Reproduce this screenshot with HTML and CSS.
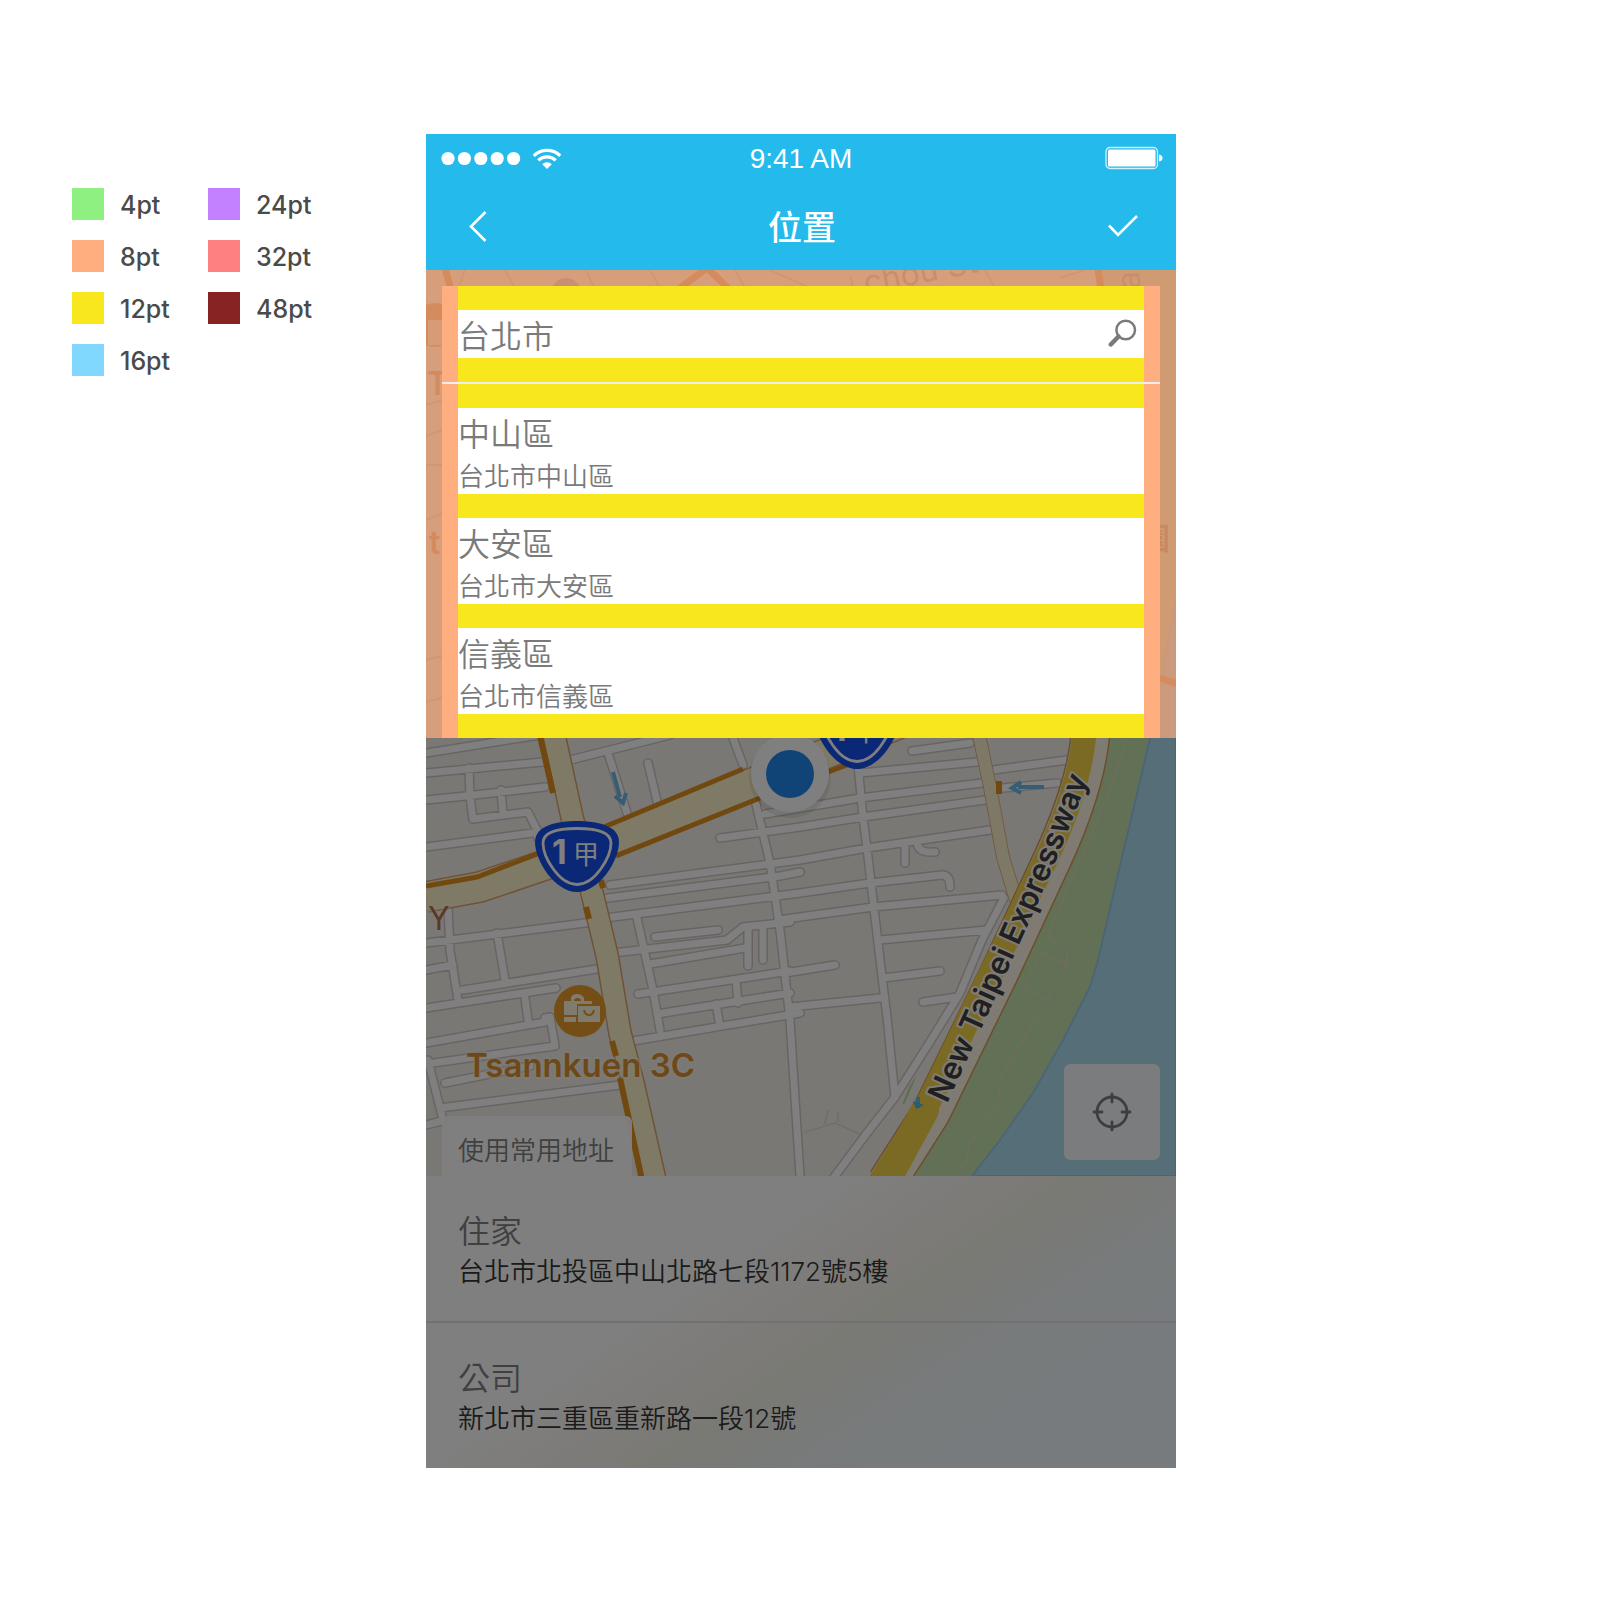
FILE: index.html
```
<!DOCTYPE html>
<html lang="zh-Hant">
<head>
<meta charset="utf-8">
<meta name="viewport" content="width=device-width, initial-scale=1">
<title>位置</title>
<link rel="stylesheet" href="styles.css">
</head>
<body>
<div class="sheet">
  <aside class="legend">
    <ul class="legend-col">
      <li><i class="swatch s4"></i><span>4pt</span></li>
      <li><i class="swatch s8"></i><span>8pt</span></li>
      <li><i class="swatch s12"></i><span>12pt</span></li>
      <li><i class="swatch s16"></i><span>16pt</span></li>
    </ul>
    <ul class="legend-col">
      <li><i class="swatch s24"></i><span>24pt</span></li>
      <li><i class="swatch s32"></i><span>32pt</span></li>
      <li><i class="swatch s48"></i><span>48pt</span></li>
    </ul>
  </aside>

  <div class="phone">
    <header class="topbar">
      <div class="status">
        <svg class="signal" width="122" height="24" viewBox="-2 -1 122 24" aria-hidden="true">
          <g fill="#fff"><circle cx="7" cy="11.500" r="6.600"/><circle cx="23.400" cy="11.500" r="6.600"/><circle cx="39.800" cy="11.500" r="6.600"/><circle cx="56.200" cy="11.500" r="6.600"/><circle cx="72.600" cy="11.500" r="6.600"/>
          <path d="M101.200 17.200 a7 7 0 0 1 9.600 0 L106 22z"/></g>
          <g fill="none" stroke="#fff" stroke-width="3.200"><path d="M92.800 8.800 a19 19 0 0 1 26.400 0"/><path d="M97.300 13.300 a12.500 12.500 0 0 1 17.400 0"/></g>
        </svg>
        <span class="time">9:41 AM</span>
        <svg class="battery" width="58" height="24" viewBox="0 0 58 24" aria-hidden="true">
          <rect x="1" y="1.500" width="51.500" height="21" rx="4" fill="none" stroke="#fff" stroke-opacity=".8" stroke-width="1.300"/>
          <rect x="3" y="3.500" width="47.500" height="17" rx="1.500" fill="#fff"/>
          <path d="M54 8.500 q3.500 .5 3.500 3.500 t-3.500 3.500z" fill="#fff"/>
        </svg>
      </div>
      <nav class="navbar">
        <button class="nav-btn" type="button" aria-label="返回"><svg width="32" height="36" viewBox="0 0 32 36"><path d="M21.500 4 L7 18.500 L21.500 33" fill="none" stroke="#fff" stroke-width="2.600"/></svg></button>
        <h1>位置</h1>
        <button class="nav-btn" type="button" aria-label="確定"><svg width="32" height="36" viewBox="0 0 32 36"><path d="M1 17.500 L10 27 L29 8" fill="none" stroke="#fff" stroke-width="2.600"/></svg></button>
      </nav>
    </header>

    <main class="content">
      <section class="map-area">
        <svg class="map" viewBox="426 270 750 906" preserveAspectRatio="xMidYMin slice" aria-hidden="true">
          <defs>
            <path id="streets" d="M426 753L540 735 M426 773L543 762 M426 800L466 796 545 787 M469 768L470 797 473 819 528 812 536 828 538 838 M501 790L503 815 M426 847L540 832
              M570 760L670 735 M608 753L627 813 M648 763L657 801 M733 738L743 765 M755 800L770 863 780 930 790 1020 800 1176 M720 838L800 827
              M610 885L800 860 M600 899L780 876 800 872 M605 918L800 893 M860 773L977 762 M765 814L860 798 982 783 M800 827L863 817 985 800 M800 860L867 848 990 830 M800 893L870 883 942 875Q950 875 950 887 M778 920L873 907 1002 895 M880 940L987 930
              M785 973L835 965 M883 978L940 971 M790 1007L880 998 M923 1002L957 997 M858 765L863 817 868 857 875 917 880 960 887 1017 895 1097
              M1004 898L982 940 960 993 933 1037 895 1097 867 1133 832 1180 M905 843L905 863 M916 841L918 846Q920 853 935 852 M912 751L970 743
              M993 770L1067 760 M1003 788L1057 783 M448 908L450 950 458 1000 M497 933L505 980 M426 943L593 922 M426 970L453 965 M463 990L603 968 M426 1008L556 988 M426 1043L545 1022 M525 998L528 1020 M545 1018L550 1017 555 1046 M426 1064L555 1046 M445 1083L530 1066 M440 1108L620 1085 M428 1060L442 1116 M426 1125L442 1121
              M613 953L727 940 743 927 790 922 M637 918L653 990 660 1030 M655 937L718 930 M650 964L745 948 M638 994L790 971 M657 1014L790 993 M736 980L738 1003 M633 1041L800 1013 M748 928L748 966 M763 930L763 960 M716 1004L719 1021"/>
            <path id="mainroad" d="M426 897L480 887 560 860 750 784 830 752 920 715"/>
            <path id="avenue" d="M553 730L572 817 593 897 607 955 620 1033 633 1083 655 1180"/>
            <path id="lane" d="M978 730L990 787 1003 857 1016 900"/>
            <path id="expressway" d="M1091 725Q1089 780 1052 860L998 976 931 1113 887 1182"/>
            <path id="expressname" d="M947 1104L982 1027 1023 936Q1066 840 1089 776L1103 736"/>
            <g id="shield">
              <path d="M577 821C596 821 619 825 619 842C619 861 599 892 577 892C555 892 535 861 535 842C535 825 558 821 577 821Z" fill="#1450ec"/>
              <path d="M577 828.500C594 828.500 611 831 611 843C611 857 595 884.500 577 884.500C559 884.500 543 857 543 843C543 831 560 828.500 577 828.500Z" fill="none" stroke="#fff" stroke-width="2.800"/>
              <text x="552" y="864" class="route-no">1</text><text x="573" y="864" class="route-cjk">甲</text>
            </g>
          </defs>
          <rect x="426" y="270" width="750" height="906" fill="#f5f0e8"/>
          <path d="M1100 270H1176V1176H880L1010 960 1090 800Z" fill="#c4e3ac"/>
          <path d="M1152 730L1123 853 1098 960 1090 987 1063 1040 1033 1093 1000 1140 972 1176H1176V600Z" fill="#acdcf0" stroke="#99cbea" stroke-width="2"/>
          <path d="M1127 738L1103 807 1047 937 1067 950 1067 965 1047 1000 1001 1077 997 1105 970 1143 967 1160 955 1176 M1042 953L1067 965 M1042 953L1023 987 1047 1000" fill="none" stroke="#ded9ba" stroke-width="1.500"/>
          <path d="M805 1132L835 1123 862 1135M825 1124L828 1110M838 1122V1112" fill="none" stroke="#ded9d0" stroke-width="1.300"/>
          <g fill="none" stroke-linecap="round" stroke-linejoin="round">
            <use href="#streets" stroke="#d2c9c6" stroke-width="10"/>
            <use href="#streets" stroke="#fff" stroke-width="7"/>
          </g>
          <g fill="none">
            <use href="#lane" stroke="#e2b78d" stroke-width="14"/><use href="#lane" stroke="#fcf3cc" stroke-width="12"/>
            <use href="#avenue" stroke="#dea570" stroke-width="24"/><use href="#mainroad" stroke="#dea570" stroke-width="32"/>
            <use href="#avenue" stroke="#fcf5cb" stroke-width="21"/><use href="#mainroad" stroke="#fcf5cb" stroke-width="29"/>
          </g>
          <path d="M426 886L477 877 540 853M604 827L743 769M616 856L760 798M828 772L847 765" fill="none" stroke="#e3911f" stroke-width="5"/>
          <path d="M540 736L553 793M586 907L589 919M601 880L603 888M612 1041L616 1056M620 1078L642 1180M999 781V794" fill="none" stroke="#e3911f" stroke-width="6"/>
          <g fill="none">
            <use href="#expressway" stroke="#d89b59" stroke-width="40"/>
            <use href="#expressway" stroke="#fff6e5" stroke-width="37"/>
            <path d="M1085 725Q1082 783 1047 857L991 973 925 1110 880 1182" stroke="#f4d446" stroke-width="24"/>
            <path d="M925 1110L886 1182" stroke="#f4d446" stroke-width="28" stroke-linecap="round"/>
          </g>
          <path d="M902 1105L909 1087 917 1075 905 1103Z" fill="#bcdca4"/>
          <path d="M613 772L620 797M615 796L623 803 626 793M1044 787H1018M1021 782L1012 788 1021 793M918 1097L918 1108" fill="none" stroke="#6cbbe8" stroke-width="4"/>
          <path d="M913 1101L924 1105 916 1109Z" fill="#59b5e2"/>
          <text class="label road"><textPath href="#expressname">New Taipei Expressway</textPath></text>
          <use href="#shield"/><use href="#shield" x="280" y="-123"/>
          <circle cx="790" cy="777" r="41" fill="#000" opacity=".08"/>
          <circle cx="790" cy="773" r="39" fill="#fff"/><circle cx="790" cy="774" r="24" fill="#2088ee"/>
          <circle cx="580" cy="1011" r="26" fill="#eb9d2c"/>
          <path d="M564 1001H571V998Q572 994 577 994T584 998V1001H592V1004H577V1015H564ZM574 1001H581Q581 998 577.500 998T574 1001Z M578 1006H600V1022H578ZM564 1017H576V1022H564Z" fill="#fff8df" fill-rule="evenodd"/>
          <path d="M584 1010Q585 1015 589 1015T594 1010" fill="none" stroke="#eb9d2c" stroke-width="2"/>
          <text x="466" y="1077" class="label shop">Tsannkuen 3C</text>
          <text x="428" y="930" class="label brown">Y</text>

          <g fill="none" stroke="#d9bba6" stroke-width="2"><path d="M465 270L459 286M505 270L515 288M586 270L594 288M650 270L660 288M735 270L745 288M770 270L810 288M850 275L853 288M985 270L995 288M1060 278L1085 270M426 405L442 400M426 436L442 430M426 465H442M426 520L442 514M426 660L442 656M426 702L442 698"/></g>
          <path d="M445 268L451 290M680 288L707 268 728 288M1098 268L1101 290M1160 678L1178 684" fill="none" stroke="#e07a20" stroke-width="7"/>
          <circle cx="566" cy="293" r="15" fill="#9a90a6"/>
          <circle cx="435" cy="325" r="22" fill="#e07a20"/><path d="M428 320H444V345H428Z" fill="#f7dfb8"/>
          <text x="866" y="294" class="label street" transform="rotate(-11 866 294)">chou St</text>
          <text x="1122" y="290" class="label street" transform="rotate(-90 1140 290)">ea</text>
          <text x="427" y="395" class="label poi">T</text><text x="429" y="554" class="label poi">t</text>
          <text x="1140" y="549" class="label park">園</text>
        </svg>
        <form class="search-zone" role="search">
          <div class="card">
            <div class="search-row">
              <input type="text" value="台北市" aria-label="搜尋地點">
              <button class="search-btn" type="submit" aria-label="搜尋"><svg width="32" height="32" viewBox="0 0 32 32"><circle cx="17.700" cy="12" r="9.300" fill="none" stroke="#7a7a7a" stroke-width="2.500"/><path d="M10.500 18.500L2.800 26.500" stroke="#7a7a7a" stroke-width="4.500" stroke-linecap="round"/></svg></button>
            </div>
            <hr>
            <ul class="results">
              <li><strong>中山區</strong><span>台北市中山區</span></li>
              <li><strong>大安區</strong><span>台北市大安區</span></li>
              <li><strong>信義區</strong><span>台北市信義區</span></li>
            </ul>
          </div>
        </form>
        <div class="map-tools">
          <h2>使用常用地址</h2>
          <button class="locate" type="button" aria-label="目前位置"><svg width="40" height="40" viewBox="0 0 40 40"><g fill="none" stroke="#7c7c7c" stroke-width="2.800" stroke-linecap="round"><circle cx="20" cy="20" r="15"/><path d="M20 2V10M20 30V38M2 20H10M30 20H38"/></g></svg></button>
        </div>
      </section>
      <ul class="places">
        <li><strong>住家</strong><span>台北市北投區中山北路七段1172號5樓</span></li>
        <li><strong>公司</strong><span>新北市三重區重新路一段12號</span></li>
      </ul>
    </main>
  </div>
</div>
</body>
</html>
```
FILE: styles.css
```
* { box-sizing: border-box; }
body { margin: 0; background: #fff; font-family: Inter, "Noto Sans CJK TC DemiLight", "Noto Sans CJK TC", sans-serif; font-weight: 350; }
ul, h1, h2 { margin: 0; padding: 0; list-style: none; font-weight: inherit; }
button { padding: 0; border: 0; background: none; display: grid; place-items: center; cursor: pointer; }
svg { display: block; }

.sheet { display: grid; grid-template-columns: 354px minmax(0, 750px); align-items: start; padding: 134px 72px 132px; }

.legend { display: flex; padding-top: 54px; }
.legend-col { display: grid; gap: 20px; width: 136px; align-content: start; }
.legend li { display: flex; align-items: center; gap: 16px; height: 32px; font-size: 25px; font-weight: 450; color: #4a4a4a; }
.legend span { line-height: 32px; padding-top: 2px; }
.swatch { width: 32px; height: 32px; }
.s4 { background: #8ef080; }
.s8 { background: #ffae80; }
.s12 { background: #f8e71c; }
.s16 { background: #80d8ff; }
.s24 { background: #c381ff; }
.s32 { background: #ff8080; }
.s48 { background: #862323; }

.topbar { background: #24baec; color: #fff; }
.status { display: grid; grid-template-columns: 1fr auto 1fr; align-items: center; height: 48px; padding: 0 13px; }
.time { font-family: "Liberation Sans", Arial, sans-serif; font-size: 28px; font-weight: 400; line-height: 32px; padding-top: 2px; }
.battery { justify-self: end; }
.navbar { display: flex; align-items: center; justify-content: space-between; height: 88px; padding: 0 36px 0 38px; }
.nav-btn { width: 32px; height: 48px; }
h1 { font-family: "Noto Sans CJK TC", sans-serif; font-size: 34px; font-weight: 500; line-height: 48px; }

.content { position: relative; }
.content::after { content: ""; position: absolute; inset: 0; background: #000; opacity: .5; pointer-events: none; }
.map-area { display: flex; flex-direction: column; }
.map { position: absolute; top: 0; left: 0; width: 100%; height: 906px; }

.search-zone { position: relative; z-index: 2; padding: 16px 16px 0; background: rgba(255, 174, 128, .7); }
.card { background: #ffae80; }
.search-row { display: flex; align-items: center; justify-content: space-between; margin: 0 16px; height: 96px; background: #fff; border: solid #f8e71c; border-width: 24px 0; }
input { flex: 1; min-width: 0; height: 48px; padding: 0; border: 0; outline: 0; background: none; font: inherit; font-size: 32px; color: #7a7a7a; }
.search-btn { width: 32px; height: 32px; margin-right: 4px; }
hr { height: 2px; margin: 0; border: 0; background: #eee; }
.results { margin: 0 16px; background: #fff; border-top: 24px solid #f8e71c; color: #7a7a7a; }
.results li { display: grid; padding-bottom: 2px; border-bottom: 24px solid #f8e71c; }
strong { font-size: 32px; font-weight: inherit; line-height: 54px; }
.results span { font-size: 26px; line-height: 30px; }

.map-tools { position: relative; display: flex; align-items: flex-end; justify-content: space-between; padding: 326px 16px 0; }
h2 { height: 60px; padding: 8px 18px 0 16px; border-radius: 6px 6px 0 0; background: rgba(255, 255, 255, .95); color: #808080; font-size: 26px; line-height: 54px; }
.locate { width: 96px; height: 96px; margin-bottom: 16px; border-radius: 6px; background: #f6f8fb; }

.places { position: relative; background: linear-gradient(146deg, #fff 0%, #fff 35%, #fbf7f2 47%, #f4f4e9 56%, #f0f5f6 67%, #eff7fb 80%); }
.places li { display: grid; padding: 36px 32px 29px; color: #363636; }
.places li + li { border-top: 2px solid #e5e1e4; }
.places strong { line-height: 40px; color: #808080; }
.places span { font-size: 26px; line-height: 40px; }

.label { font-family: Inter, "Noto Sans CJK TC", sans-serif; font-weight: 600; font-size: 32px; paint-order: stroke; stroke: #fff8ef; stroke-width: 4px; stroke-linejoin: round; }
.road { font-size: 31px; fill: #404040; }
.shop { font-size: 33px; fill: #dc922e; stroke-opacity: .5; }
.poi { fill: #d9701c; stroke: none; }
.brown { fill: #b97346; font-weight: 400; stroke-opacity: .4; }
.street { fill: #9a8a7c; font-weight: 400; stroke: none; }
.park { fill: #8a6a30; stroke: none; font-size: 30px; }
.route-no { font: 700 34px Inter, sans-serif; fill: #fff; }
.route-cjk { font: 400 26px "Noto Sans CJK TC", sans-serif; fill: #fff; }
```
